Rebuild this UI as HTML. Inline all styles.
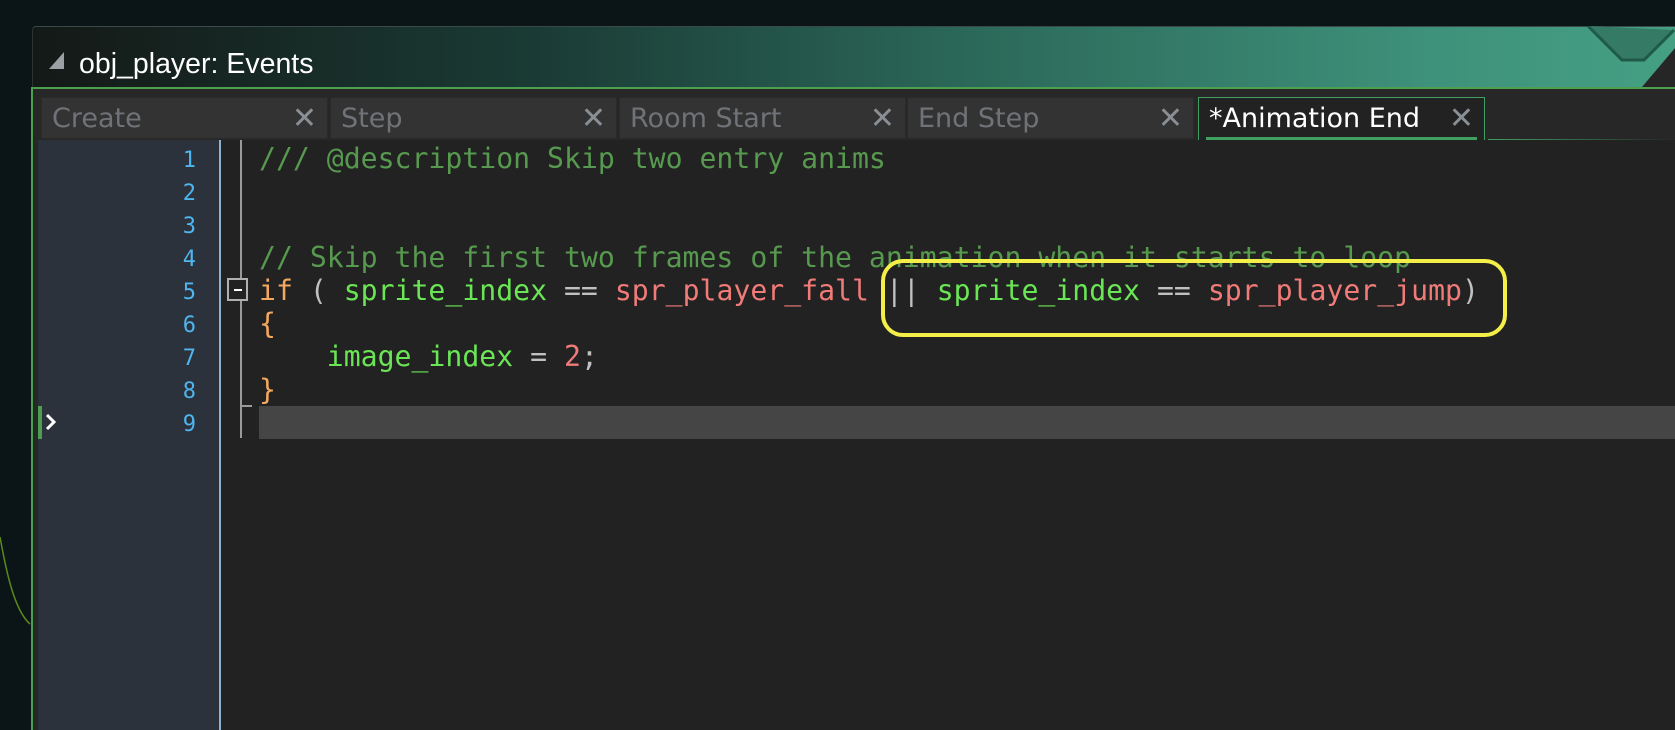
<!DOCTYPE html>
<html><head><meta charset="utf-8"><style>
body{margin:0;width:1675px;height:730px;overflow:hidden;background:#0b1517;position:relative;font-family:"DejaVu Sans","Liberation Sans",sans-serif}
.abs{position:absolute}
#title{left:32px;top:26px;width:1643px;height:61px;background:linear-gradient(90deg,#141917 0%,#1a3a34 30%,#2a6556 55%,#3e917a 85%,#45a083 100%);border-top:1px solid #3a4a46;border-left:1px solid #2a3330;box-sizing:border-box;border-radius:4px 0 0 0}
#body{left:31px;top:87px;width:1644px;height:643px;background:#272727;border-left:2px solid #4aa04f;border-top:2px solid #4aa04f;box-sizing:border-box}
.tab{position:absolute;top:97px;height:42px;width:287px;background:#333;box-sizing:border-box;border:1px solid #2a2a2a;color:#6f7378;font-size:27px;line-height:42px;padding-left:10px}
.tab .x{position:absolute;right:10px;top:0;color:#8a8f96;font-family:"Liberation Sans",sans-serif;font-size:30px}
.tab.act{background:#222;border:1px solid #3fa060;border-bottom:none;color:#fff;height:43px}
.code{font-family:"DejaVu Sans Mono",monospace;font-size:28.15px;line-height:33px;white-space:pre}
.ln{position:absolute;left:130px;width:66px;text-align:right;color:#4fb5ee;font-family:"DejaVu Sans Mono",monospace;font-size:22px;line-height:33px}
.c{color:#57994f}.g{color:#6ae655}.r{color:#f07b78}.o{color:#f3a860}.w{color:#c0c0c0}
</style></head><body>
<svg class="abs" style="left:0;top:500px" width="32" height="130"><path d="M0 37 C6 70 14 110 30 124" stroke="#5a8a18" stroke-width="1.5" fill="none"/></svg>
<div id="title" class="abs"></div>
<svg class="abs" style="left:1586px;top:26px" width="89" height="61"><path d="M2 0 L36 34 L58 34 L88 4" stroke="#1f5a48" stroke-width="3" fill="#347a64"/><path d="M56 61 L89 22 L89 61Z" fill="#262626"/></svg>
<svg class="abs" style="left:47px;top:50px" width="20" height="20"><path d="M2 19 L17 2 L17 19Z" fill="#9aa0a4"/></svg>
<div class="abs" style="left:79px;top:44px;color:#fff;line-height:40px;font-family:'Liberation Sans',sans-serif;font-size:28.5px">obj_player: Events</div>
<div id="body" class="abs"></div>
<div class="abs" style="left:1488px;top:139px;width:187px;height:1px;background:linear-gradient(90deg,#3fa060,#272727)"></div>
<div class="tab" style="left:41px">Create<span class="x">✕</span></div>
<div class="tab" style="left:330px">Step<span class="x">✕</span></div>
<div class="tab" style="left:619px">Room Start<span class="x">✕</span></div>
<div class="tab" style="left:907px">End Step<span class="x">✕</span></div>
<div class="tab act" style="left:1198px">*Animation End<span class="x">✕</span><div class="abs" style="left:7px;right:7px;bottom:0;height:3px;background:#3fa060"></div></div>
<div class="abs" style="left:38px;top:140px;width:181px;height:590px;background:#2b323b"></div>
<div class="abs" style="left:219px;top:140px;width:2px;height:590px;background:#8fb3cf"></div>
<div class="abs" style="left:221px;top:140px;width:1454px;height:590px;background:#222"></div>
<div class="abs" style="left:240px;top:140px;width:2px;height:298px;background:#9a9a9a"></div>
<div class="abs" style="left:240px;top:405px;width:12px;height:2px;background:#9a9a9a"></div>
<div class="abs" style="left:259px;top:406px;width:1416px;height:33px;background:#454545"></div>
<div class="abs" style="left:38px;top:406px;width:4px;height:33px;background:#4aa04f"></div>
<svg class="abs" style="left:45px;top:413px" width="12" height="18"><path d="M2 2 L9 9 L2 16" stroke="#fff" stroke-width="3" fill="none"/></svg>
<div class="abs" style="left:227px;top:278px;width:21px;height:23px;border:2px solid #b0b0b0;box-sizing:border-box;background:#222"><div class="abs" style="left:5px;top:9px;width:8px;height:2px;background:#fff"></div></div>
<div class="ln" style="top:144px">1<br>2<br>3<br>4<br>5<br>6<br>7<br>8<br>9</div>
<div class="abs code" style="left:259px;top:142px"><span class="c">/// @description Skip two entry anims</span>


<span class="c">// Skip the first two frames of the animation when it starts to loop</span>
<span class="o">if</span><span class="w"> ( </span><span class="g">sprite_index</span><span class="w"> == </span><span class="r">spr_player_fall</span><span class="w"> || </span><span class="g">sprite_index</span><span class="w"> == </span><span class="r">spr_player_jump</span><span class="w">)</span>
<span class="o">{</span>
    <span class="g">image_index</span><span class="w"> = </span><span class="r">2</span><span class="w">;</span>
<span class="o">}</span>
</div>
<div class="abs" style="left:881px;top:259px;width:626px;height:78px;border:4px solid #f4ef48;border-radius:22px;box-sizing:border-box"></div>
</body></html>
